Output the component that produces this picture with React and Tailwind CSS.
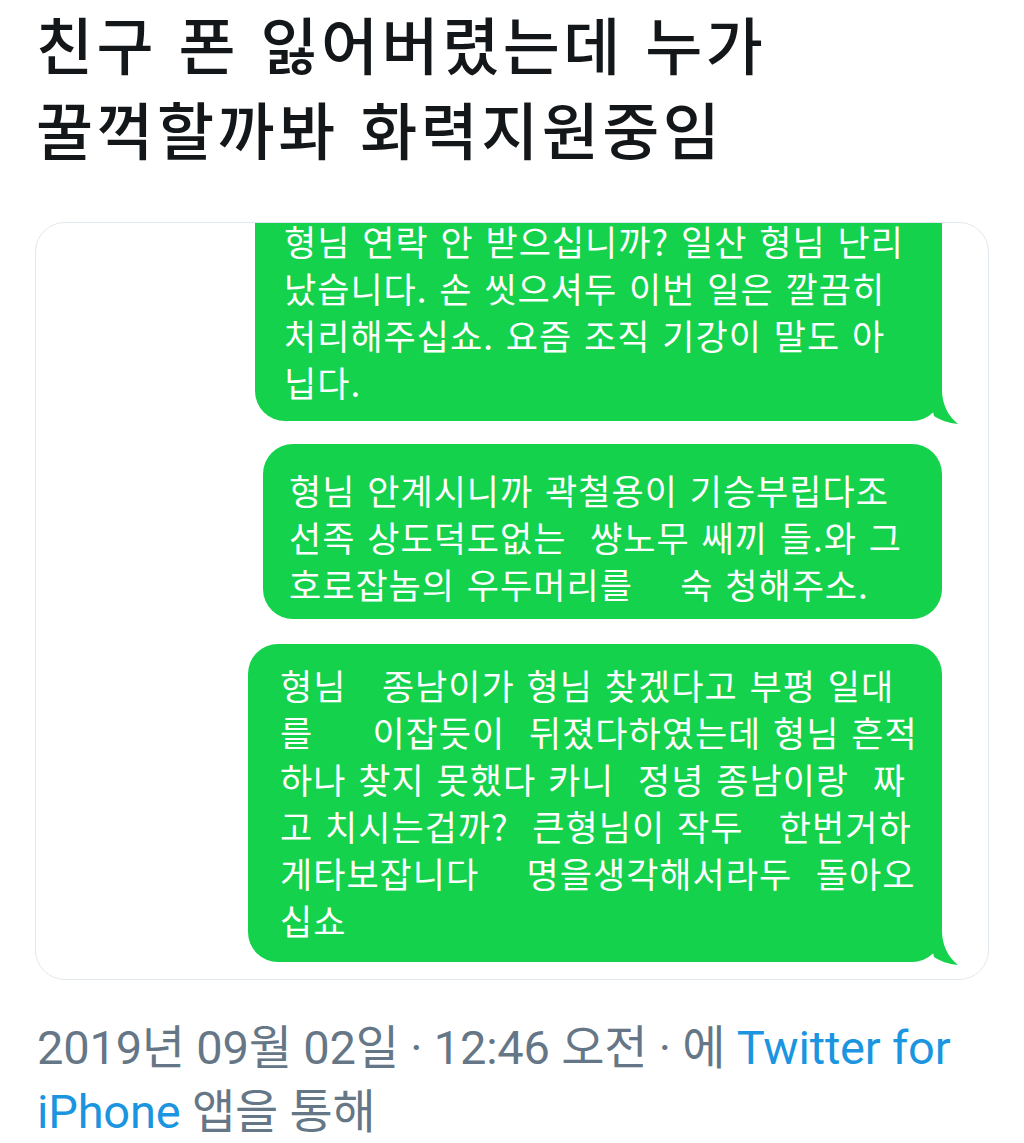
export default function App() {
  const bubbleText =
    "text-white text-[35px] leading-[47px] tracking-[1px] whitespace-pre font-['Noto_Sans_CJK_KR','Noto_Sans',sans-serif] [word-spacing:3px]";
  return (
    <div className="w-[1024px] h-[1143px] bg-white overflow-hidden font-['Roboto','Noto_Sans_CJK_KR',sans-serif]">
      <h1 className="pl-[36px] pt-[1px] text-[62px] leading-[85px] tracking-[3.5px] [word-spacing:4px] font-medium text-[#14171a] font-['Noto_Sans_CJK_KR',sans-serif]">
        <div>친구 폰 잃어버렸는데 누가</div>
        <div>꿀꺽할까봐 화력지원중임</div>
      </h1>
      <div className="ml-[35px] mt-[51px] w-[954px] h-[758px] border border-[#e1e8ed] rounded-[30px] overflow-hidden bg-white">
        <div className="flex flex-col items-end pr-[46px]">
          {/* Bubble 1 */}
          <div className="relative -mt-[6px] w-[687px] bg-[#14d24b] rounded-b-[30px] pl-[29px] pb-[16px]">
            <div className={bubbleText}>
              <div>형님 연락 안 받으십니까? 일산 형님 난리</div>
              <div>났습니다. 손 씻으셔두 이번 일은 깔끔히</div>
              <div>처리해주십쇼. 요즘 조직 기강이 말도 아</div>
              <div>닙다.</div>
            </div>
            <Tail />
          </div>
          {/* Bubble 2 */}
          <div className="mt-[23px] w-[679px] bg-[#14d24b] rounded-[30px] pl-[26px] pt-[22px] pb-[12px]">
            <div className={bubbleText}>
              <div>형님 안계시니까 곽철용이 기승부립다조</div>
              <div>선족 상도덕도없는  썅노무 쌔끼 들.와 그</div>
              <div>호로잡놈의 우두머리를    숙 청해주소.</div>
            </div>
          </div>
          {/* Bubble 3 */}
          <div className="relative mt-[25px] w-[694px] bg-[#14d24b] rounded-[30px] pl-[32px] pt-[17px] pb-[19px]">
            <div className={bubbleText}>
              <div>형님   종남이가 형님 찾겠다고 부평 일대</div>
              <div>를     이잡듯이  뒤졌다하였는데 형님 흔적</div>
              <div>하나 찾지 못했다 카니  정녕 종남이랑  짜</div>
              <div>고 치시는겁까?  큰형님이 작두   한번거하</div>
              <div>게타보잡니다    명을생각해서라두  돌아오</div>
              <div>십쇼</div>
            </div>
            <Tail />
          </div>
        </div>
      </div>
      <div className="pl-[37px] mt-[36px] text-[47px] leading-[64px] tracking-[-0.2px] text-[#657786]">
        <div>
          2019년 09월 02일 · 12:46 오전 · 에 <span className="text-[#1b95e0]">Twitter for</span>
        </div>
        <div>
          <span className="text-[#1b95e0]">iPhone</span> 앱을 통해
        </div>
      </div>
    </div>
  );
}

function Tail() {
  return (
    <svg
      className="absolute right-[-16px] bottom-[-3px]"
      width="30"
      height="34"
      viewBox="0 0 30 34"
    >
      <path d="M0 0 L14 0 C14 14 20 26 30 34 C20 33 12 30 6 26 Z" fill="#14d24b" />
    </svg>
  );
}
